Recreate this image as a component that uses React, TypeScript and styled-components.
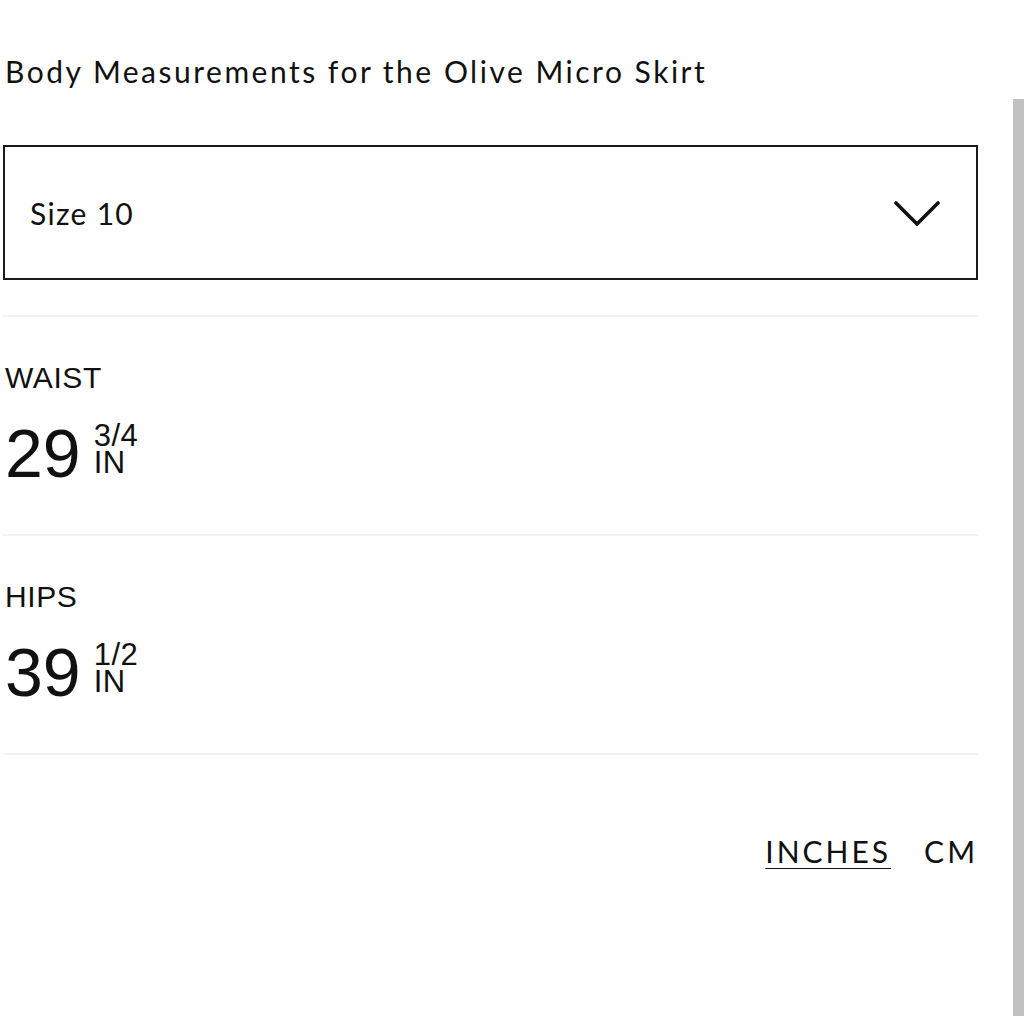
import React from "react";
import styled, { createGlobalStyle } from "styled-components";

const GlobalStyle = createGlobalStyle`
  html, body {
    margin: 0;
    padding: 0;
    background: #ffffff;
    overflow: hidden;
  }
  body {
    font-family: "Lato", "Liberation Sans", sans-serif;
    color: #111111;
  }
`;

const Page = styled.div`
  width: 975px;
  padding: 53px 0 0 3px;
  display: flex;
  flex-direction: column;
`;

const Title = styled.h1`
  margin: 0 0 0 2px;
  font-family: "Lato", sans-serif;
  font-weight: 400;
  font-size: 30px;
  letter-spacing: 2.5px;
  line-height: 36px;
  color: #111111;
`;

const SelectBox = styled.div`
  margin-top: 56px;
  height: 135px;
  box-sizing: border-box;
  border: 2px solid #1a1a1a;
  display: flex;
  align-items: center;
  justify-content: space-between;
  padding: 0 36px 0 25px;
`;

const SelectText = styled.span`
  font-family: "Lato", sans-serif;
  font-size: 30px;
  letter-spacing: 1.3px;
  color: #111111;
`;

const Divider = styled.div<{ $top: number }>`
  margin-top: ${(p) => p.$top}px;
  height: 2px;
  background: #f1f1f1;
`;

const Section = styled.section`
  padding: 43px 0 47px 0;
  display: flex;
  flex-direction: column;
  gap: 23px;
`;

const Label = styled.div`
  font-family: "Liberation Sans", Arial, sans-serif;
  font-size: 30px;
  letter-spacing: 0.6px;
  line-height: 36px;
  color: #111111;
  margin-left: 2px;
`;

const ValueRow = styled.div`
  display: flex;
  align-items: flex-start;
  gap: 13px;
  margin-left: 2px;
`;

const Whole = styled.span`
  font-family: "Liberation Sans", Arial, sans-serif;
  font-size: 68px;
  line-height: 68px;
  color: #111111;
`;

const Fraction = styled.span`
  display: flex;
  flex-direction: column;
  margin-top: 3px;
  font-family: "Liberation Sans", Arial, sans-serif;
  font-size: 31px;
  line-height: 27px;
  color: #111111;
`;

const FractionPart = styled.span`
  display: block;
  height: 27px;
  letter-spacing: 0.5px;
`;

const Units = styled.div`
  margin-top: 78px;
  display: flex;
  justify-content: flex-end;
  gap: 33px;
  padding-right: 0;
`;

const Unit = styled.span<{ $active?: boolean }>`
  font-family: "Lato", sans-serif;
  font-size: 30px;
  letter-spacing: 3px;
  line-height: 36px;
  color: #111111;
  text-decoration: ${(p) => (p.$active ? "underline" : "none")};
  text-decoration-thickness: 2px;
  text-underline-offset: 5px;
`;

const ScrollThumb = styled.div`
  position: fixed;
  right: 0;
  top: 99px;
  bottom: 0;
  width: 11px;
  background: #c1c1c1;
`;

const Chevron = () => (
  <svg width="46" height="26" viewBox="0 0 46 26" fill="none">
    <path
      d="M2 3 L23 24 L44 3"
      stroke="#111"
      strokeWidth="3.6"
      strokeLinecap="round"
      strokeLinejoin="miter"
    />
  </svg>
);

const measurements = [
  { label: "WAIST", whole: "29", frac: "3/4" },
  { label: "HIPS", whole: "39", frac: "1/2" },
];

export default function App() {
  return (
    <>
      <GlobalStyle />
      <Page>
        <Title>Body Measurements for the Olive Micro Skirt</Title>
        <SelectBox>
          <SelectText>Size 10</SelectText>
          <Chevron />
        </SelectBox>
        <Divider $top={35} />
        {measurements.map((m) => (
          <React.Fragment key={m.label}>
            <Section>
              <Label>{m.label}</Label>
              <ValueRow>
                <Whole>{m.whole}</Whole>
                <Fraction>
                  <FractionPart>{m.frac}</FractionPart>
                  <FractionPart>IN</FractionPart>
                </Fraction>
              </ValueRow>
            </Section>
            <Divider $top={0} />
          </React.Fragment>
        ))}
        <Units>
          <Unit $active>INCHES</Unit>
          <Unit>CM</Unit>
        </Units>
      </Page>
      <ScrollThumb />
    </>
  );
}
